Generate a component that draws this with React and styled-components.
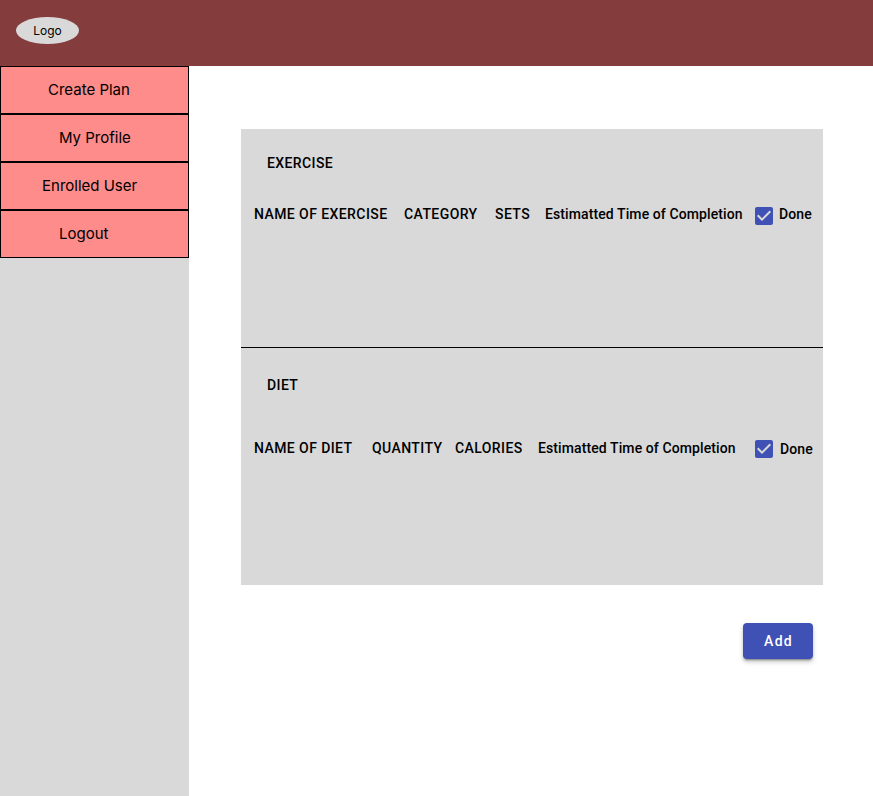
import React from "react";
import styled, { createGlobalStyle } from "styled-components";

const GlobalStyle = createGlobalStyle`
  * { box-sizing: border-box; }
  body { margin: 0; background: #fff; color: #000; }
`;

const Page = styled.div`
  display: flex;
  flex-direction: column;
  height: 796px;
  overflow: hidden;
`;

const Header = styled.header`
  flex: none;
  height: 66px;
  padding: 17px 16px;
  background: #843c3c;
`;

const Logo = styled.div`
  width: 63px;
  height: 27px;
  border-radius: 50%;
  background: #d9d9d9;
  display: flex;
  align-items: center;
  justify-content: center;
  font: 400 12px/15px Inter, sans-serif;
`;

const Body = styled.div`
  flex: 1;
  display: flex;
`;

const Sidebar = styled.nav`
  flex: none;
  width: 189px;
  background: #d9d9d9;
`;

const NavItem = styled.a`
  display: flex;
  align-items: center;
  height: 48px;
  padding-left: ${(p) => p.$indent}px;
  border: 1px solid #000;
  background: #fd8c8b;
  font: 400 15px/18px Inter, sans-serif;
  white-space: nowrap;
`;

const Main = styled.main`
  flex: none;
  width: 634px;
  padding: 63px 0 0 52px;
  display: flex;
  flex-direction: column;
`;

const Card = styled.div`
  height: 456px;
  background: #d9d9d9;
  font: 500 14px/20px Roboto, sans-serif;
  white-space: nowrap;
`;

const Section = styled.section`
  height: ${(p) => p.$height}px;
  padding-top: ${(p) => p.$top}px;
  border-bottom: ${(p) => (p.$divided ? "1px solid #000" : "none")};
`;

const Title = styled.h2`
  margin: 0 0 ${(p) => p.$gap}px 26px;
  font: inherit;
  letter-spacing: 0.4px;
`;

const Row = styled.div`
  display: grid;
  grid-template-columns: ${(p) => p.$columns};
  padding-left: 13px;
`;

const Heading = styled.span`
  letter-spacing: ${(p) => (p.$caps ? 0.42 : 0.1)}px;
`;

const Done = styled.label`
  display: flex;
  letter-spacing: 0.1px;
  gap: ${(p) => p.$gap}px;
`;

const DoneText = styled.span`
  margin-top: ${(p) => p.$shift}px;
`;

const Check = styled.svg`
  width: 18px;
  height: 18px;
  margin-top: ${(p) => p.$shift}px;
  fill: #3f51b5;
`;

const AddButton = styled.button`
  align-self: flex-end;
  width: 70px;
  height: 36px;
  margin: 38px 10px 0 0;
  padding: 0 0 0 1px;
  border: 0;
  border-radius: 4px;
  background: #3f51b5;
  color: #fff;
  font: 500 14px/16px Roboto, sans-serif;
  letter-spacing: 1.25px;
  box-shadow: 0 3px 1px -2px rgba(0, 0, 0, 0.2), 0 2px 2px rgba(0, 0, 0, 0.14),
    0 3px 5px rgba(0, 0, 0, 0.2);
`;

const navItems = [
  { label: "Create Plan", indent: 47 },
  { label: "My Profile", indent: 58 },
  { label: "Enrolled User", indent: 41 },
  { label: "Logout", indent: 58 },
];

const sections = [
  {
    title: "EXERCISE",
    height: 219,
    top: 24,
    gap: 31,
    columns: "150px 91px 50px 210px auto",
    headings: ["NAME OF EXERCISE", "CATEGORY", "SETS"],
    checkShift: 3,
    textShift: 0,
    doneGap: 6,
  },
  {
    title: "DIET",
    height: 237,
    top: 27,
    gap: 43,
    columns: "118px 83px 83px 217px auto",
    headings: ["NAME OF DIET", "QUANTITY", "CALORIES"],
    checkShift: 2,
    textShift: 1,
    doneGap: 7,
  },
];

export default function App() {
  return (
    <Page>
      <GlobalStyle />
      <Header>
        <Logo>Logo</Logo>
      </Header>
      <Body>
        <Sidebar>
          {navItems.map((n) => (
            <NavItem key={n.label} $indent={n.indent}>{n.label}</NavItem>
          ))}
        </Sidebar>
        <Main>
          <Card>
            {sections.map((s, i) => (
              <Section key={s.title} $height={s.height} $top={s.top} $divided={i === 0}>
                <Title $gap={s.gap}>{s.title}</Title>
                <Row $columns={s.columns}>
                  {s.headings.map((h) => (
                    <Heading key={h} $caps>{h}</Heading>
                  ))}
                  <Heading>Estimatted Time of Completion</Heading>
                  <Done $gap={s.doneGap}>
                    <Check viewBox="3 3 18 18" $shift={s.checkShift}>
                      <path d="M19 3H5c-1.11 0-2 .9-2 2v14c0 1.1.89 2 2 2h14c1.11 0 2-.9 2-2V5c0-1.1-.89-2-2-2zm-9 14l-5-5 1.41-1.41L10 14.17l7.59-7.59L19 8l-9 9z" />
                    </Check>
                    <DoneText $shift={s.textShift}>Done</DoneText>
                  </Done>
                </Row>
              </Section>
            ))}
          </Card>
          <AddButton>Add</AddButton>
        </Main>
      </Body>
    </Page>
  );
}
